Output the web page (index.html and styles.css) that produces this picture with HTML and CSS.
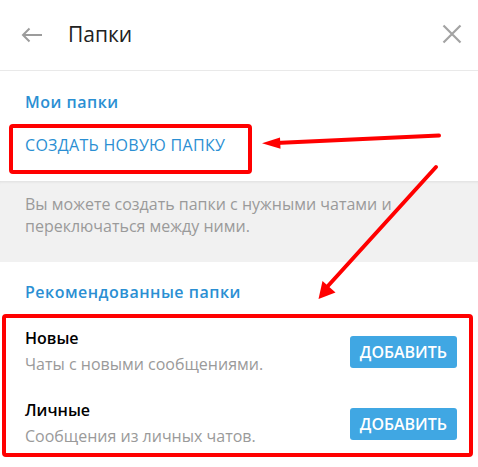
FILE: index.html
```html
<!DOCTYPE html>
<html lang="ru">
<head>
<meta charset="utf-8">
<title>Папки</title>
<link rel="stylesheet" href="styles.css">
</head>
<body>
<div class="box">
  <header class="header">
    <svg class="icon-back" width="22" height="16" viewBox="0 0 22 16" aria-hidden="true">
      <path d="M21 8H2M8.5 1.5L2 8l6.5 6.5" fill="none" stroke="#9c9c9c" stroke-width="2"/>
    </svg>
    <h1 class="title">Папки</h1>
    <svg class="icon-close" width="20" height="20" viewBox="0 0 20 20" aria-hidden="true">
      <path d="M1.5 1.5l17 17M18.5 1.5l-17 17" fill="none" stroke="#a3a3a3" stroke-width="2.2"/>
    </svg>
  </header>

  <section class="my">
    <div class="section-title">Мои папки</div>
    <div class="create">СОЗДАТЬ НОВУЮ ПАПКУ</div>
  </section>

  <div class="about">Вы можете создать папки с нужными чатами и переключаться между ними.</div>

  <section class="rec">
    <div class="section-title">Рекомендованные папки</div>
    <div class="row">
      <div class="row-text">
        <div class="row-name">Новые</div>
        <div class="row-desc">Чаты с новыми сообщениями.</div>
      </div>
      <button class="add">ДОБАВИТЬ</button>
    </div>
    <div class="row">
      <div class="row-text">
        <div class="row-name">Личные</div>
        <div class="row-desc">Сообщения из личных чатов.</div>
      </div>
      <button class="add">ДОБАВИТЬ</button>
    </div>
  </section>

  <svg class="annot" width="478" height="467" viewBox="0 0 478 467" aria-hidden="true">
    <rect x="11" y="126" width="239" height="46" rx="2" fill="none" stroke="#ff0000" stroke-width="4"/>
    <rect x="4" y="316" width="467" height="139" rx="2" fill="none" stroke="#ff0000" stroke-width="4"/>
    <path d="M439 135.5L276 143" stroke="#ff0000" stroke-width="4" stroke-linecap="round"/>
    <path d="M262 143.3L280 137.5L280.5 148.8Z" fill="#ff0000"/>
    <path d="M436 167L327 287" stroke="#ff0000" stroke-width="4" stroke-linecap="round"/>
    <path d="M318.5 299L322.5 281L335.5 292.5Z" fill="#ff0000"/>
  </svg>
</div>
</body>
</html>
```

FILE: styles.css
```css
html, body {
  margin: 0;
  padding: 0;
  background: #ffffff;
}

body {
  font-family: "Open Sans", "Noto Sans", "Liberation Sans", sans-serif;
  font-size: 16px;
  line-height: 22px;
  color: #000000;
  overflow: hidden;
}

.box {
  position: relative;
  width: 478px;
  height: 467px;
}

.header {
  display: flex;
  align-items: center;
  height: 70px;
  padding: 0 16px 0 21px;
  border-bottom: 1px solid #e9e9e9;
  box-sizing: content-box;
}

.icon-back {
  flex: none;
  margin-top: -1px;
}

.title {
  flex: 1;
  margin: 0 0 0 25px;
  font-size: 21px;
  line-height: 26px;
  font-weight: 500;
  color: #222222;
  margin-top: -3px;
}

.icon-close {
  flex: none;
  margin-top: -2px;
}

.my {
  padding: 20px 25px 25px;
}

.section-title {
  font-weight: 600;
  color: #2b8fd3;
  letter-spacing: 0.5px;
}

.create {
  margin-top: 21px;
  color: #2b8fd3;
  letter-spacing: 0.3px;
}

.about {
  background: #f1f1f1;
  box-shadow: inset 0 3px 3px -2px rgba(0, 0, 0, 0.08);
  padding: 12px 40px 25px 25px;
  color: #9a9a9a;
}

.rec {
  padding: 19px 0 0 25px;
}

.rec .section-title {
  margin-bottom: 12px;
}

.row {
  display: flex;
  align-items: center;
  justify-content: space-between;
  padding: 12px 21px 12px 0;
}

.row-name {
  font-weight: 600;
  color: #000000;
}

.row-desc {
  margin-top: 4px;
  color: #9a9a9a;
}

.add {
  font-family: inherit;
  font-size: 16px;
  font-weight: 600;
  line-height: 22px;
  color: #ffffff;
  background: #40a7e3;
  border: none;
  border-radius: 3px;
  padding: 5px 10px;
  margin-top: 1px;
}

.annot {
  position: absolute;
  left: 0;
  top: 0;
  pointer-events: none;
}
```
